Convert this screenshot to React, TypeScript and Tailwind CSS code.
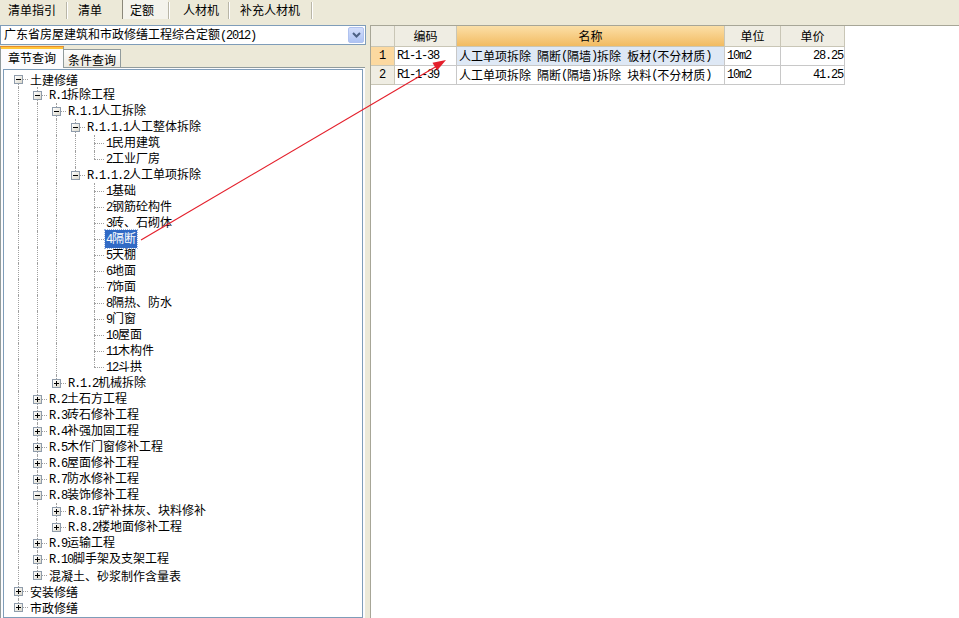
import React from "react";

type Node = { t: string; c?: Node[]; open?: boolean; sel?: boolean };

const leaves = (xs: string[]): Node[] => xs.map((t) => ({ t }));
const shut = (t: string): Node => ({ t, c: [] });

const tree: Node[] = [
  {
    t: "土建修缮",
    open: true,
    c: [
      {
        t: "R.1拆除工程",
        open: true,
        c: [
          {
            t: "R.1.1人工拆除",
            open: true,
            c: [
              { t: "R.1.1.1人工整体拆除", open: true, c: leaves(["1民用建筑", "2工业厂房"]) },
              {
                t: "R.1.1.2人工单项拆除",
                open: true,
                c: [
                  { t: "1基础" },
                  { t: "2钢筋砼构件" },
                  { t: "3砖、石砌体" },
                  { t: "4隔断", sel: true },
                  ...leaves(["5天棚", "6地面", "7饰面", "8隔热、防水", "9门窗", "10屋面", "11木构件", "12斗拱"]),
                ],
              },
            ],
          },
          shut("R.1.2机械拆除"),
        ],
      },
      shut("R.2土石方工程"),
      shut("R.3砖石修补工程"),
      shut("R.4补强加固工程"),
      shut("R.5木作门窗修补工程"),
      shut("R.6屋面修补工程"),
      shut("R.7防水修补工程"),
      {
        t: "R.8装饰修补工程",
        open: true,
        c: [shut("R.8.1铲补抹灰、块料修补"), shut("R.8.2楼地面修补工程")],
      },
      shut("R.9运输工程"),
      shut("R.10脚手架及支架工程"),
      shut("混凝土、砂浆制作含量表"),
    ],
  },
  shut("安装修缮"),
  shut("市政修缮"),
];

type Row = { n: Node; guides: boolean[]; last: boolean; first: boolean };

const flatten = (nodes: Node[], guides: boolean[], out: Row[] = []) => {
  nodes.forEach((n, i) => {
    const last = i === nodes.length - 1;
    out.push({ n, guides, last, first: guides.length === 0 && i === 0 });
    if (n.open && n.c) flatten(n.c, [...guides, !last], out);
  });
  return out;
};

// half-width characters in the old UI font are 6px wide
const Txt = ({ s }: { s: string }) => (
  <>
    {s
      .split(/([\x20-\x7e]+)/)
      .filter(Boolean)
      .map((p, i) =>
        /^[\x20-\x7e]+$/.test(p) ? (
          <span key={i} className="font-['Liberation_Mono',monospace] tracking-[-1.2px] whitespace-pre">
            {p}
          </span>
        ) : (
          <span key={i}>{p}</span>
        )
      )}
  </>
);

const Expander = ({ open }: { open: boolean }) => (
  <div className="absolute left-[5px] top-[4px] h-[9px] w-[9px] border border-[#8f9cab] bg-gradient-to-br from-white to-[#dcd9cc]">
    <div className="absolute left-[1px] top-[3px] h-[1px] w-[5px] bg-black" />
    {!open && <div className="absolute left-[3px] top-[1px] h-[5px] w-[1px] bg-black" />}
  </div>
);

const TreeRow = ({ r }: { r: Row }) => {
  const kids = !!r.n.c;
  return (
    <div className="flex h-4 items-center">
      {r.guides.map((g, i) => (
        <div key={i} className="relative h-4 w-[19px] shrink-0">
          {g && <div className="absolute left-[9px] top-0 h-4 border-l border-dotted border-[#a0a0a0]" />}
        </div>
      ))}
      <div className="relative h-4 w-[19px] shrink-0">
        {!r.first && <div className="absolute left-[9px] top-0 h-2 border-l border-dotted border-[#a0a0a0]" />}
        {!r.last && <div className="absolute left-[9px] top-2 h-2 border-l border-dotted border-[#a0a0a0]" />}
        <div className="absolute left-[9px] top-2 w-[10px] border-t border-dotted border-[#a0a0a0]" />
        {kids && <Expander open={!!r.n.open} />}
      </div>
      <span
        className={`ml-[1px] px-[1px] leading-[15px] whitespace-nowrap ${
          r.n.sel ? "bg-[#316ac5] text-white outline outline-1 outline-dotted outline-[#9db6e0]" : ""
        }`}
      >
        <Txt s={r.n.t} />
      </span>
    </div>
  );
};

const TopTab = ({ label, w, pl, sel }: { label: string; w: string; pl: string; sel?: boolean }) => (
  <div
    className={`flex h-[19px] items-center ${w} ${pl} ${
      sel ? "ml-[3px] border-l border-[#8a877a] bg-[#f4f3ec]" : ""
    }`}
  >
    {label}
  </div>
);

const Sep = () => <div className="mt-[2px] h-[17px] w-[2px] border-l border-[#b9b6a7] border-r border-r-white" />;

const cols = [
  { k: "no", w: "w-[24px]" },
  { k: "code", w: "w-[62px]" },
  { k: "name", w: "w-[268px]" },
  { k: "unit", w: "w-[56px]" },
  { k: "price", w: "w-[64px]" },
];

const heads: Record<string, string> = { no: "", code: "编码", name: "名称", unit: "单位", price: "单价" };

const data = [
  { no: "1", code: "R1-1-38", name: "人工单项拆除 隔断(隔墙)拆除 板材(不分材质)", unit: "10m2", price: "28.25" },
  { no: "2", code: "R1-1-39", name: "人工单项拆除 隔断(隔墙)拆除 块料(不分材质)", unit: "10m2", price: "41.25" },
];

export default function App() {
  const rows = flatten(tree, []);
  return (
    <div className="relative flex h-[618px] w-[959px] flex-col overflow-hidden bg-[#ece9d8] font-['Noto_Sans_CJK_SC',sans-serif] text-[12px] leading-[14px] text-black">
      {/* top tabs */}
      <div className="flex h-[20px] shrink-0">
        <TopTab label="清单指引" w="w-[66px]" pl="pl-[8px]" />
        <Sep />
        <TopTab label="清单" w="w-[51px]" pl="pl-[10px]" />
        <TopTab label="定额" w="w-[46px]" pl="pl-[7px]" sel />
        <Sep />
        <TopTab label="人材机" w="w-[58px]" pl="pl-[13px]" />
        <Sep />
        <TopTab label="补充人材机" w="w-[81px]" pl="pl-[10px]" />
        <Sep />
      </div>

      <div className="mt-[5px] flex min-h-0 flex-1">
        {/* left column */}
        <div className="flex w-[366px] shrink-0 flex-col">
          <div className="flex h-[20px] items-center border border-[#7f9db9] bg-white pl-[3px] pr-[1px]">
            <div className="flex-1 whitespace-nowrap">
              <Txt s="广东省房屋建筑和市政修缮工程综合定额(2012)" />
            </div>
            <div className="flex h-[16px] w-[16px] items-center justify-center rounded-[2px] border border-[#b0c2ef] bg-gradient-to-b from-[#d3defb] to-[#aec3f3]">
              <svg width="9" height="6" viewBox="0 0 9 6">
                <path d="M1 1 L4.5 4.5 L8 1" fill="none" stroke="#4d6185" strokeWidth="2" />
              </svg>
            </div>
          </div>

          <div className="flex h-[22px] items-end">
            <div className="relative z-10 -mb-px flex h-[22px] w-[64px] items-center border-x border-[#919b9c] bg-[#fcfcfe] pl-[7px] pt-[1px]">
              <div className="absolute -left-px -right-px top-0 h-[1px] bg-[#e68b2c]" />
              <div className="absolute left-0 right-0 top-[1px] h-[2px] bg-[#ffc73c]" />
              章节查询
            </div>
            <div className="flex h-[18px] w-[57px] items-center border-r border-t border-[#919b9c] bg-gradient-to-b from-white to-[#eceae2] pl-[4px] pt-[2px]">
              条件查询
            </div>
          </div>

          <div className="mr-[1px] flex min-h-0 flex-1 flex-col border-l border-t border-[#919b9c] bg-[#fcfcfe] px-[2px] pt-[1px]">
            <div className="min-h-0 flex-1 overflow-hidden border border-[#7f9db9] bg-white pl-[5px] pt-[1px]">
              {rows.map((r, i) => (
                <TreeRow key={i} r={r} />
              ))}
            </div>
          </div>
        </div>

        {/* splitter */}
        <div className="w-[4px] shrink-0" />

        {/* grid */}
        <div className="min-w-0 flex-1 border-l border-t border-[#a7a697] bg-white">
          <div className="flex h-[21px]">
            {cols.map((c) => (
              <div
                key={c.k}
                className={`${c.w} flex shrink-0 items-center justify-center border-b border-r border-[#c9c6b6] ${
                  c.k === "name" ? "bg-gradient-to-b from-[#fbdfa6] to-[#f2bb60]" : "bg-[#efede3]"
                }`}
              >
                {heads[c.k]}
              </div>
            ))}
          </div>
          {data.map((d, ri) => (
            <div key={d.no} className="flex h-[19px]">
              <div
                className={`flex w-[24px] shrink-0 items-center justify-center border-b border-r border-[#c9c6b6] font-['Liberation_Mono',monospace] ${
                  ri === 0 ? "bg-[#fcd9a0]" : "bg-[#efede3]"
                }`}
              >
                {d.no}
              </div>
              <div className="flex w-[62px] shrink-0 items-center border-b border-r border-[#c8c8c8] pl-[2px]">
                <Txt s={d.code} />
              </div>
              <div
                className={`flex w-[268px] shrink-0 items-center border-b border-r border-[#c8c8c8] pl-[2px] ${
                  ri === 0 ? "bg-[#dee8f5]" : ""
                }`}
              >
                <Txt s={d.name} />
              </div>
              <div className="flex w-[56px] shrink-0 items-center border-b border-r border-[#c8c8c8] pl-[2px]">
                <Txt s={d.unit} />
              </div>
              <div className="flex w-[64px] shrink-0 items-center justify-end border-b border-r border-[#c8c8c8] pr-[1px]">
                <Txt s={d.price} />
              </div>
            </div>
          ))}
        </div>
      </div>

      {/* annotation arrow */}
      <svg className="pointer-events-none absolute left-0 top-0" width="959" height="618">
        <line x1="141" y1="240" x2="437" y2="66" stroke="#e4202c" strokeWidth="1.2" />
        <polygon points="446,60 437.1,70.5 432.5,62.7" fill="#e4202c" />
      </svg>
    </div>
  );
}
